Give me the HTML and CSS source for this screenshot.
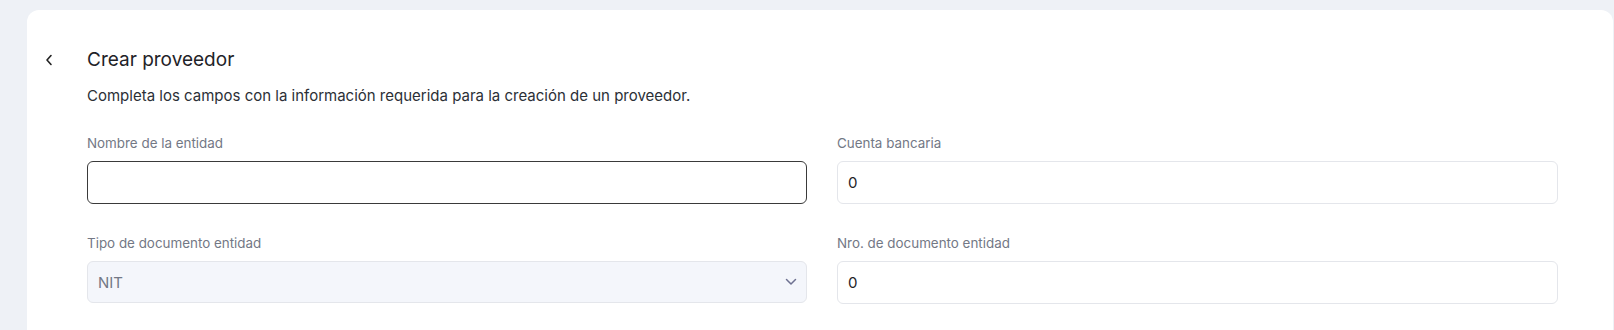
FILE: index.html
```html
<!DOCTYPE html>
<html lang="es">
<head>
  <meta charset="UTF-8">
  <title>Crear proveedor</title>
  <link rel="stylesheet" href="styles.css">
</head>
<body>

  <div class="card">
    <div class="header">
      <button type="button" class="back-btn" aria-label="Volver">
        <svg width="8" height="12" viewBox="0 0 8 12">
          <path d="M6 1.5 L2 6 L6 10.5" fill="none" stroke="#222" stroke-width="1.6" stroke-linecap="round" stroke-linejoin="round"/>
        </svg>
      </button>
      <div class="header-text">
        <h1 class="title">Crear proveedor</h1>
        <p class="subtitle">Completa los campos con la información requerida para la creación de un proveedor.</p>
      </div>
    </div>

    <form class="form-grid">
      <div class="form-group">
        <label for="nombre">Nombre de la entidad</label>
        <input id="nombre" type="text" class="active" autofocus />
      </div>

      <div class="form-group">
        <label for="cuenta">Cuenta bancaria</label>
        <input id="cuenta" type="text" value="0" />
      </div>

      <div class="form-group">
        <label for="tipo">Tipo de documento entidad</label>
        <div class="select-wrap">
          <select id="tipo" disabled>
            <option value="NIT">NIT</option>
          </select>
          <svg class="select-arrow" width="12" height="8" viewBox="0 0 12 8">
            <path d="M1.5 1.5 L6 6 L10.5 1.5" fill="none" stroke="#6e7191" stroke-width="1.5" stroke-linecap="round" stroke-linejoin="round"/>
          </svg>
        </div>
      </div>

      <div class="form-group">
        <label for="documento">Nro. de documento entidad</label>
        <input id="documento" type="text" value="0" />
      </div>
    </form>
  </div>

  <script>
    document.getElementById("nombre").focus();
  </script>

</body>
</html>
```

FILE: styles.css
```css
body {
  margin: 0;
  background-color: #eef1f6;
  font-family: Inter, "Noto Sans", sans-serif;
  color: #1f2328;
}

.card {
  margin: 10px 1px 0 27px;
  background-color: white;
  border-radius: 12px 12px 0 0;
  padding: 36px 0 40px 0;
  height: 320px;
  box-sizing: border-box;
}

.header {
  display: flex;
  align-items: flex-start;
}

.back-btn {
  width: 60px;
  height: 28px;
  padding: 0 0 0 18px;
  border: none;
  background: none;
  display: flex;
  align-items: center;
  cursor: pointer;
}

.title {
  margin: 0;
  font-size: 19px;
  line-height: 28px;
  font-weight: 400;
  color: #1f2328;
}

.subtitle {
  margin: 12px 0 0;
  font-size: 15px;
  line-height: 20px;
  color: #2b2f36;
}

.form-grid {
  display: grid;
  grid-template-columns: 720px 721px;
  column-gap: 30px;
  row-gap: 30px;
  margin: 28px 0 0 60px;
}

.form-group label {
  display: block;
  font-size: 13.4px;
  line-height: 18px;
  color: #737885;
  margin-bottom: 9px;
}

input, select {
  width: 100%;
  height: 43px;
  padding: 0 10px;
  border: 1px solid #e4e6eb;
  border-radius: 6px;
  font-family: Inter, "Noto Sans", sans-serif;
  font-size: 15px;
  color: #1f2328;
  background-color: white;
  box-sizing: border-box;
  outline: none;
  caret-color: #111;
}

input.active, input:focus {
  border-color: #3a3a3a;
}

.select-wrap {
  position: relative;
}

select {
  appearance: none;
  -webkit-appearance: none;
  height: 42px;
  background-color: #f4f6fb;
  color: #737885;
  opacity: 1;
}

.select-arrow {
  position: absolute;
  right: 10px;
  top: 17px;
}
```
